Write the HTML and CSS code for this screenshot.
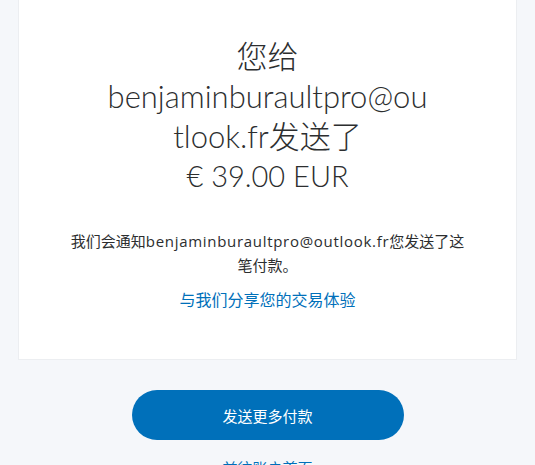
FILE: index.html
```html
<!DOCTYPE html>
<html lang="zh-CN">
  <head>
    <meta charset="UTF-8" />
    <meta name="viewport" content="width=device-width, initial-scale=1.0" />
    <title>付款已发送</title>
    <link rel="stylesheet" href="styles.css">
  </head>
  <body>
    <main class="page">
      <section class="card">
        <h1 class="title">
          您给benjaminburaultpro@outlook.fr发送了
          <span class="amount">€ 39.00 EUR</span>
        </h1>
        <p class="note">我们会通知<span class="email">benjaminburaultpro@outlook.fr</span>您发送了这笔付款。</p>
        <a class="feedback" href="#">与我们分享您的交易体验</a>
      </section>

      <div class="actions">
        <a class="primary-btn" href="#">发送更多付款</a>
        <a class="home-link" href="#">前往账户首页</a>
      </div>
    </main>
  </body>
</html>
```

FILE: styles.css
```css
body {
  margin: 0;
  background: #f5f7fa;
  color: #2c2e2f;
  font-family: Lato, "Noto Sans CJK SC", sans-serif;
}

.page {
  display: flex;
  flex-direction: column;
  padding: 0 18px;
}

.card {
  display: flex;
  flex-direction: column;
  align-items: center;
  background: #ffffff;
  border: 1px solid #eceef1;
  border-top: none;
  padding: 36px 20px 47px;
  text-align: center;
}

.title {
  width: 324px;
  margin: 0;
  font-size: 31px;
  font-weight: 300;
  line-height: 40px;
  overflow-wrap: break-word;
}

.amount {
  display: block;
  font-size: 29px;
}

.note {
  width: 402px;
  margin: 33px 0 0;
  font-family: "Open Sans", "Noto Sans CJK SC", sans-serif;
  font-size: 15px;
  line-height: 24px;
}

.email {
  letter-spacing: 0.7px;
}

.feedback {
  margin-top: 11px;
  color: #0070ba;
  font-size: 16px;
  line-height: 24px;
  text-decoration: none;
}

.actions {
  display: flex;
  flex-direction: column;
  align-items: center;
  padding-top: 30px;
}

.primary-btn {
  display: flex;
  justify-content: center;
  align-items: center;
  width: 272px;
  height: 50px;
  border-radius: 25px;
  background: #0070ba;
  color: #ffffff;
  font-size: 15px;
  text-decoration: none;
}

.home-link {
  margin-top: 16px;
  color: #0070ba;
  font-size: 15px;
  line-height: 24px;
  text-decoration: none;
}
```
